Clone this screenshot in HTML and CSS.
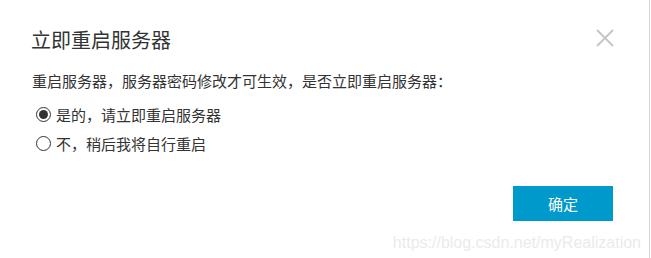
FILE: index.html
```html
<!DOCTYPE html>
<html lang="zh-CN">
<head>
  <meta charset="UTF-8">
  <meta name="viewport" content="width=device-width, initial-scale=1.0">
  <title>立即重启服务器</title>
  <link rel="stylesheet" href="styles.css">
</head>
<body>

  <!-- Restart dialog -->
  <div class="dialog">
    <div class="dialog-header">
      <h2 class="dialog-title">立即重启服务器</h2>
      <button class="close-btn" type="button" aria-label="关闭">
        <svg width="20" height="20" viewBox="0 0 20 20">
          <path d="M2 2 L18 18 M18 2 L2 18" stroke="#c6c6c6" stroke-width="2" fill="none"/>
        </svg>
      </button>
    </div>

    <div class="dialog-body">
      <p class="message">重启服务器，服务器密码修改才可生效，是否立即重启服务器：</p>
      <label class="option">
        <span class="radio checked"></span>
        是的，请立即重启服务器
      </label>
      <label class="option">
        <span class="radio"></span>
        不，稍后我将自行重启
      </label>
    </div>

    <div class="dialog-footer">
      <button class="ok-btn" type="button">确定</button>
    </div>

    <div class="watermark">https://blog.csdn.net/myRealization</div>
  </div>

</body>
</html>
```

FILE: styles.css
```css
body {
  margin: 0;
  padding: 0;
  background-color: #fff;
  font-family: "Noto Sans CJK SC", "Liberation Sans", sans-serif;
  color: #333;
}

.dialog {
  position: relative;
  width: 650px;
  height: 258px;
  border-right: 1px solid #d4d4d4;
  box-sizing: border-box;
  padding: 0 36px 0 31px;
}

.dialog-header {
  display: flex;
  justify-content: space-between;
  align-items: center;
  padding-top: 26px;
  height: 28px;
}

.dialog-title {
  margin: 0;
  font-size: 20px;
  font-weight: normal;
  line-height: 28px;
  color: #333;
}

.close-btn {
  background: none;
  border: none;
  padding: 0;
  margin-right: -2px;
  margin-top: -5px;
  width: 20px;
  height: 20px;
  cursor: pointer;
}

.close-btn svg {
  display: block;
}

.dialog-body {
  padding-top: 16px;
}

.message {
  margin: 0 0 8px 1px;
  font-size: 15px;
  line-height: 22px;
}

.option {
  display: flex;
  align-items: center;
  font-size: 15px;
  line-height: 29px;
  margin-left: 5px;
}

.radio {
  width: 13px;
  height: 13px;
  border: 1.5px solid #333;
  border-radius: 50%;
  margin-right: 5px;
  position: relative;
}

.radio.checked::after {
  content: "";
  position: absolute;
  top: 2px;
  left: 2px;
  width: 9px;
  height: 9px;
  border-radius: 50%;
  background-color: #333;
}

.dialog-footer {
  display: flex;
  justify-content: flex-end;
  padding-top: 28px;
}

.ok-btn {
  width: 100px;
  height: 35px;
  background-color: #0099cc;
  color: #fff;
  border: none;
  font-family: inherit;
  font-size: 15px;
  cursor: pointer;
}

.watermark {
  position: absolute;
  right: 8px;
  bottom: 6px;
  font-family: "Liberation Sans", sans-serif;
  font-size: 16px;
  color: #ebebeb;
}
```
